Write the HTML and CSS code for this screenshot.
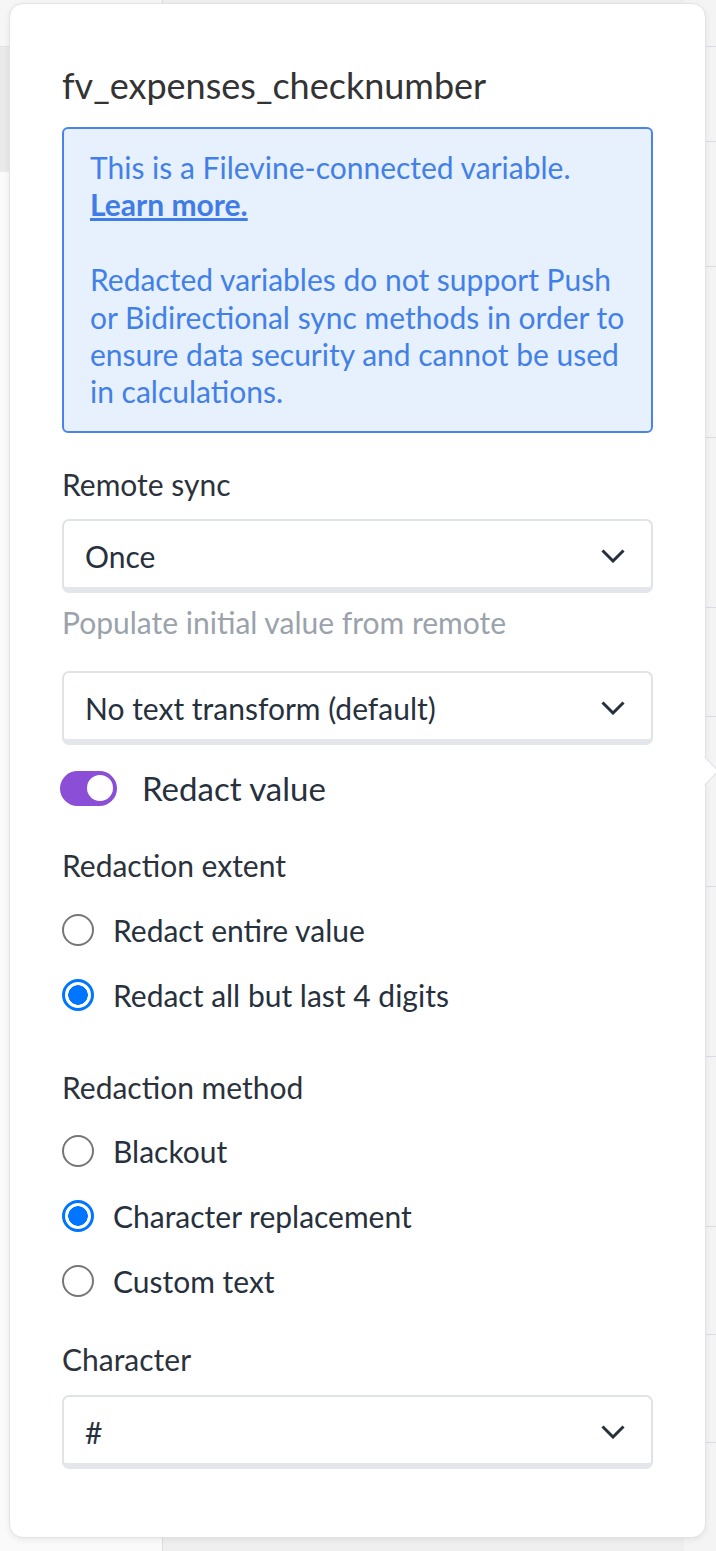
FILE: index.html
```html
<!DOCTYPE html>
<html>
<head>
<meta charset="utf-8">
<link rel="stylesheet" href="styles.css">
</head>
<body>
<div class="bg">
  <div class="bg-left">
    <div class="bg-top"></div>
    <div class="bg-band"></div>
    <div class="bg-rest"></div>
  </div>
  <div class="bg-mid"></div>
  <div class="bg-right">
    <div class="row" style="height:47px"></div>
    <div class="row" style="height:95px"></div>
    <div class="row" style="height:125px"></div>
    <div class="row" style="height:171px"></div>
    <div class="row" style="height:170px"></div>
    <div class="row" style="height:109px"></div>
    <div class="row" style="height:170px"></div>
    <div class="row" style="height:170px"></div>
    <div class="row" style="height:170px"></div>
    <div class="row" style="height:108px"></div>
    <div class="row" style="height:108px"></div>
  </div>
</div>

<div class="popover">
  <div class="arrow"></div>
  <h1 class="title">fv_expenses_checknumber</h1>
  <div class="info">
    <p>This is a Filevine-connected variable.<br><a class="learn" href="#">Learn more.</a></p>
    <p>Redacted variables do not support Push<br>or Bidirectional sync methods in order to<br>ensure data security and cannot be used<br>in calculations.</p>
  </div>

  <div class="label label-remote">Remote sync</div>
  <div class="select">
    <span>Once</span>
    <svg class="chev" width="24" height="14" viewBox="0 0 24 14"><path d="M1.5 1.5 L12 12 L22.5 1.5" fill="none" stroke="#27303d" stroke-width="3"/></svg>
  </div>
  <div class="helper">Populate initial value from remote</div>
  <div class="select select-transform">
    <span>No text transform (default)</span>
    <svg class="chev" width="24" height="14" viewBox="0 0 24 14"><path d="M1.5 1.5 L12 12 L22.5 1.5" fill="none" stroke="#27303d" stroke-width="3"/></svg>
  </div>

  <div class="toggle-row">
    <div class="toggle"><div class="knob"></div></div>
    <span class="toggle-label">Redact value</span>
  </div>

  <div class="label label-extent">Redaction extent</div>
  <div class="radios">
    <div class="radio-row"><span class="radio"></span><span>Redact entire value</span></div>
    <div class="radio-row"><span class="radio on"></span><span>Redact all but last 4 digits</span></div>
  </div>

  <div class="label label-method">Redaction method</div>
  <div class="radios">
    <div class="radio-row"><span class="radio"></span><span>Blackout</span></div>
    <div class="radio-row"><span class="radio on"></span><span>Character replacement</span></div>
    <div class="radio-row"><span class="radio"></span><span>Custom text</span></div>
  </div>

  <div class="label label-char">Character</div>
  <div class="select">
    <span>#</span>
    <svg class="chev" width="24" height="14" viewBox="0 0 24 14"><path d="M1.5 1.5 L12 12 L22.5 1.5" fill="none" stroke="#27303d" stroke-width="3"/></svg>
  </div>
</div>
</body>
</html>
```
FILE: styles.css
```css
html, body {
  margin: 0;
  padding: 0;
  width: 716px;
  height: 1551px;
  overflow: hidden;
  background: #f9f9f9;
  font-family: "Lato", "Open Sans", sans-serif;
}

.bg {
  display: grid;
  grid-template-columns: 162px 522px 1fr;
  height: 1551px;
}
.bg-left {
  display: flex;
  flex-direction: column;
}
.bg-top {
  height: 46px;
  background: #f6f6f6;
  border-bottom: 1px solid #e2e2e2;
}
.bg-band {
  height: 125px;
  background: #eaeaea;
}
.bg-rest {
  flex: 1;
  background: #fafafa;
}
.bg-mid {
  background: #efeff0;
  border-left: 1px solid #dcdcdc;
}
.bg-right {
  background: #f4f4f5;
}
.row {
  box-sizing: border-box;
  border-bottom: 1px solid #dcdde2;
}

.popover {
  position: absolute;
  left: 9px;
  top: 3px;
  width: 697px;
  height: 1535px;
  box-sizing: border-box;
  background: #fff;
  border: 1px solid #e3e3e3;
  border-radius: 14px;
  box-shadow: 0 2px 6px rgba(0, 0, 0, 0.07);
  padding: 62px 52px 0 52px;
  color: #27303d;
}
.arrow {
  position: absolute;
  right: -10px;
  top: 757px;
  width: 19px;
  height: 19px;
  background: #fff;
  border-top: 1px solid #dde0e6;
  border-right: 1px solid #dde0e6;
  transform: rotate(45deg);
}

.title {
  margin: 0;
  font-size: 36px;
  line-height: 38px;
  font-weight: 400;
  color: #333;
}

.info {
  margin-top: 23px;
  box-sizing: border-box;
  height: 306px;
  border: 2px solid #4a84e8;
  border-radius: 6px;
  background: #e7f0fd;
  padding: 20px 20px 20px 26px;
  color: #4280e8;
  font-size: 30px;
  line-height: 37.4px;
  white-space: nowrap;
}
.info p {
  margin: 0;
}
.info p + p {
  margin-top: 37.4px;
}
.learn {
  color: #3f7ce6;
  font-weight: 700;
  text-decoration: underline;
}

.label {
  font-size: 30px;
  line-height: 36px;
  color: #2b323c;
}
.label-remote { margin-top: 33px; margin-bottom: 17px; }
.label-extent { margin-top: 41px; }
.label-method { margin-top: 56px; }
.label-char { margin-top: 42px; margin-bottom: 18px; }

.select {
  box-sizing: border-box;
  height: 74px;
  border: 2px solid #dfe2e7;
  border-bottom: 6px solid #e3e6eb;
  border-radius: 7px;
  display: flex;
  align-items: center;
  justify-content: space-between;
  padding: 3px 26px 0 21px;
  font-size: 30px;
  color: #27303d;
}
.chev {
  display: block;
}

.helper {
  margin-top: 11px;
  font-size: 30px;
  line-height: 36px;
  color: #9aa2ac;
}
.select-transform {
  margin-top: 31px;
}

.toggle-row {
  margin-top: 25px;
  height: 36px;
  display: flex;
  align-items: center;
  margin-left: -2px;
}
.toggle {
  width: 57px;
  height: 35px;
  border-radius: 18px;
  background: #8a4fd6;
  display: flex;
  align-items: center;
  justify-content: flex-end;
  padding-right: 4px;
  box-sizing: border-box;
}
.knob {
  width: 26px;
  height: 26px;
  border-radius: 50%;
  background: #fff;
}
.toggle-label {
  margin-left: 25px;
  font-size: 33px;
  color: #27303d;
}

.radios {
  display: flex;
  flex-direction: column;
  gap: 29px;
  margin-top: 29px;
}
.label-method + .radios {
  margin-top: 28px;
}
.radio-row {
  height: 36px;
  display: flex;
  align-items: center;
  font-size: 30px;
  color: #27303d;
}
.radio {
  box-sizing: border-box;
  width: 32px;
  height: 32px;
  border-radius: 50%;
  border: 2px solid #767676;
  margin-right: 19px;
  flex: none;
}
.radio.on {
  border: 3px solid #0075ff;
  background: radial-gradient(circle, #0075ff 0 9.5px, #fff 10px);
}
```
